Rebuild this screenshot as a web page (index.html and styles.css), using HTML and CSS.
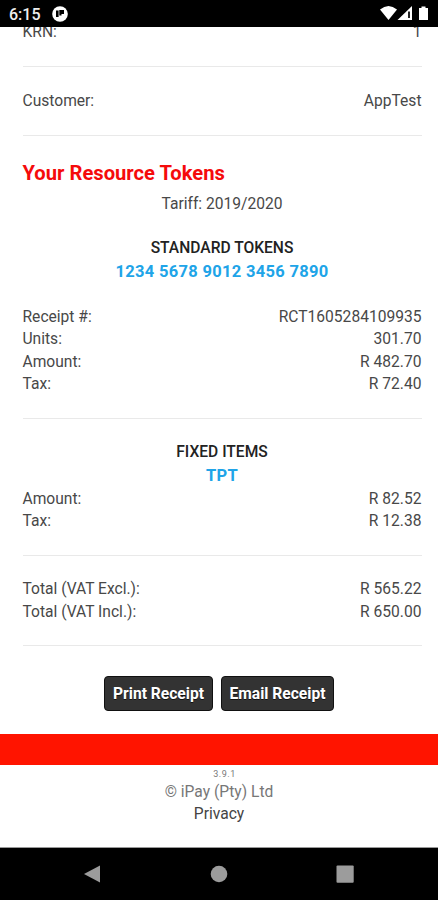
FILE: index.html
```html
<!DOCTYPE html>
<html lang="en">
<head>
<meta charset="utf-8">
<title>Receipt</title>
<link rel="stylesheet" href="styles.css">
</head>
<body>
<div class="phone">
  <header class="status">
    <span class="time">6:15</span>
    <svg class="app-icon" width="16" height="16" viewBox="0 0 16 16"><circle cx="8" cy="8" r="7.8" fill="#fff"/><path d="M4 4.500h2.600v6.500H4zM7.300 4H12v4H9.500v1.500H7.300z" fill="#000"/></svg>
    <svg class="signals" width="52" height="18" viewBox="0 0 52 18"><path d="M1 4.500Q9.500-2.500 18 4.500L9.500 15z" fill="#fff"/><path d="M33 1v14H18.500z" fill="#fff"/><path d="M29 6.500h2v6.500h-2z" fill="#222"/><path d="M42.500 1.500h4v1.500h2.500v12h-9V3h2.500z" fill="#fff"/></svg>
  </header>
  <main class="receipt">
    <div class="row"><span>KRN:</span><span>1</span></div>
    <hr>
    <div class="row"><span>Customer:</span><span>AppTest</span></div>
    <hr>
    <h1>Your Resource Tokens</h1>
    <p class="tariff">Tariff: 2019/2020</p>
    <h2 class="standard">STANDARD TOKENS</h2>
    <p class="token number">1234 5678 9012 3456 7890</p>
    <div class="row"><span>Receipt #:</span><span>RCT1605284109935</span></div>
    <div class="row"><span>Units:</span><span>301.70</span></div>
    <div class="row"><span>Amount:</span><span>R 482.70</span></div>
    <div class="row"><span>Tax:</span><span>R 72.40</span></div>
    <hr>
    <h2>FIXED ITEMS</h2>
    <p class="token">TPT</p>
    <div class="row"><span>Amount:</span><span>R 82.52</span></div>
    <div class="row"><span>Tax:</span><span>R 12.38</span></div>
    <hr>
    <div class="row"><span>Total (VAT Excl.):</span><span>R 565.22</span></div>
    <div class="row"><span>Total (VAT Incl.):</span><span>R 650.00</span></div>
    <hr>
    <div class="actions"><button class="print">Print Receipt</button><button class="email">Email Receipt</button></div>
  </main>
  <div class="band"></div>
  <footer class="footer">
    <small>3.9.1</small>
    <span class="company">© iPay (Pty) Ltd</span>
    <a>Privacy</a>
  </footer>
  <nav class="nav">
    <svg width="18" height="20" viewBox="0 0 18 20"><path d="M1 10L17 1.500v17z" fill="#9c9c9c"/></svg>
    <svg width="18" height="20" viewBox="0 0 18 20"><circle cx="9" cy="10" r="8.300" fill="#9c9c9c"/></svg>
    <svg width="18" height="20" viewBox="0 0 18 20"><rect x=".5" y="1.500" width="17.200" height="17.200" rx="1" fill="#9c9c9c"/></svg>
  </nav>
</div>
</body>
</html>
```
FILE: styles.css
```css
* { box-sizing: border-box; }
body { margin: 0; background: #fff; font-family: Roboto, sans-serif; }
.phone { width: 438px; height: 900px; overflow: hidden; display: flex; flex-direction: column; }
.status { height: 27px; flex: none; background: #000; color: #fff; display: flex; align-items: center; padding: 1px 8px 0 9px; }
.time { width: 43px; font-size: 16px; font-weight: 500; color: #eee; }
.signals { margin-left: auto; margin-right: -1px; }
.receipt { height: 707px; flex: none; overflow: hidden; padding: 0 16.5px 0 22.5px; color: #484848; font-size: 15.6px; line-height: 22.3px; }
.receipt > .row:first-child { margin-top: -5.6px; }
.row { display: flex; justify-content: space-between; height: 22.3px; }
hr { border: 0; height: 1px; margin: 22.5px 0; background: #e9e9e9; }
h1, h2, p { margin: 0; }
h1 { color: #f50b0b; font-size: 20.2px; font-weight: 700; line-height: 30px; }
.tariff { text-align: center; margin-top: 5px; }
h2 { color: #222; font-size: 15.6px; font-weight: 500; line-height: 22.3px; text-align: center; }
.standard { margin-top: 22px; }
.token { color: #20a4e8; font-size: 16.5px; font-weight: 700; line-height: 24px; letter-spacing: .3px; text-align: center; }
.number { margin-bottom: 22.6px; }
.actions { display: flex; gap: 8px; padding: 7px 0 0 81.5px; }
button { height: 35px; padding: 1px 0 0; border: 1px solid #111; border-radius: 4px; background: #333; color: #fff; font: 700 15.6px Roboto, sans-serif; text-shadow: 0 1px 0 #111; }
.print { width: 109px; }
.email { width: 113px; }
.band { height: 31px; flex: none; background: #ff1400; }
.footer { height: 83px; flex: none; display: flex; flex-direction: column; align-items: center; color: #777; font-size: 15.6px; line-height: 22.3px; border-bottom: 1px solid #999; }
small { margin-left: 11px; padding-top: 3px; font-size: 9px; line-height: 13px; letter-spacing: .5px; }
.footer a { color: #444; }
.nav { flex: 1; background: #000; display: flex; justify-content: space-between; align-items: center; padding: 0 84px 0 83px; }
```
